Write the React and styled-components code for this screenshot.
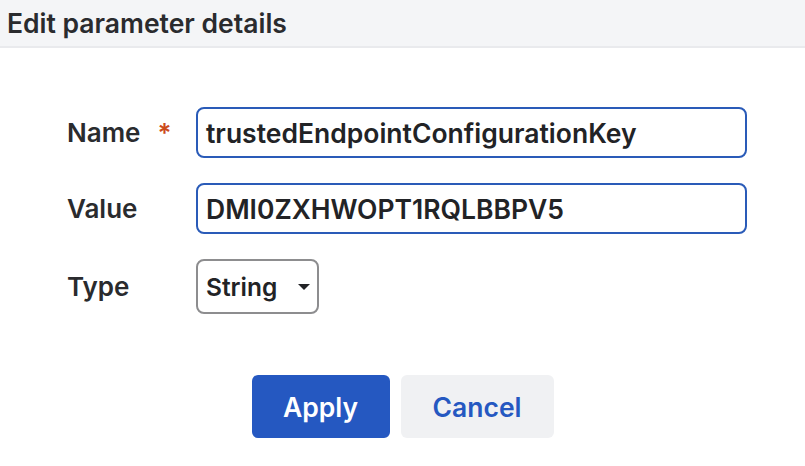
import React from "react";
import styled, { createGlobalStyle } from "styled-components";

const GlobalStyle = createGlobalStyle`
  body {
    margin: 0;
    background: #ffffff;
    font-family: Inter, "Noto Sans", sans-serif;
    color: #222326;
  }
`;

const Page = styled.div`
  width: 805px;
  height: 466px;
  background: #fff;
  overflow: hidden;
`;

const Header = styled.div`
  height: 46px;
  background: #f4f5f7;
  border-bottom: 2px solid #e9eaed;
  display: flex;
  align-items: center;
  padding-left: 7px;
  font-size: 26.5px;
  font-weight: 600;
  color: #2a2b2e;
`;

const Form = styled.div`
  display: grid;
  grid-template-columns: 129px 551px;
  row-gap: 25px;
  padding: 59px 0 0 67px;
  align-items: center;
`;

const Label = styled.div`
  display: flex;
  align-items: center;
  font-size: 26px;
  font-weight: 600;
  color: #2a2b2e;
`;

const Required = styled.span`
  color: #cc4b1c;
  margin-left: 17px;
  font-size: 26px;
`;

const Input = styled.div`
  box-sizing: border-box;
  height: 51px;
  border: 2px solid ${p => (p.$focused ? "#2a5bb8" : "#8d8d8f")};
  border-radius: 8px;
  display: flex;
  align-items: center;
  padding-left: 8px;
  font-size: 26.5px;
  font-weight: 600;
  color: #222326;
`;

const Select = styled(Input)`
  width: 123px;
  height: 55px;
  padding: 0 7px 0 8px;
  justify-content: space-between;
  font-size: 24.5px;
`;

const Caret = styled.span`
  width: 0;
  height: 0;
  border-left: 6px solid transparent;
  border-right: 6px solid transparent;
  border-top: 6px solid #222326;
`;

const Actions = styled.div`
  display: flex;
  justify-content: center;
  gap: 11px;
  margin-top: 61px;
`;

const Button = styled.button`
  height: 63px;
  border: none;
  border-radius: 6px;
  font-family: Inter, "Noto Sans", sans-serif;
  font-size: 26.5px;
  font-weight: 600;
  padding: 0;
  width: ${p => p.$w}px;
  background: ${p => (p.$primary ? "#2558c1" : "#f0f1f3")};
  color: ${p => (p.$primary ? "#ffffff" : "#2558c1")};
`;

export default function App() {
  return (
    <Page>
      <GlobalStyle />
      <Header>Edit parameter details</Header>
      <Form>
        <Label>
          Name<Required>*</Required>
        </Label>
        <Input $focused>trustedEndpointConfigurationKey</Input>
        <Label>Value</Label>
        <Input $focused>DMI0ZXHWOPT1RQLBBPV5</Input>
        <Label>Type</Label>
        <div>
          <Select>
            String
            <Caret />
          </Select>
        </div>
      </Form>
      <Actions>
        <Button $primary $w={138}>Apply</Button>
        <Button $w={153}>Cancel</Button>
      </Actions>
    </Page>
  );
}
